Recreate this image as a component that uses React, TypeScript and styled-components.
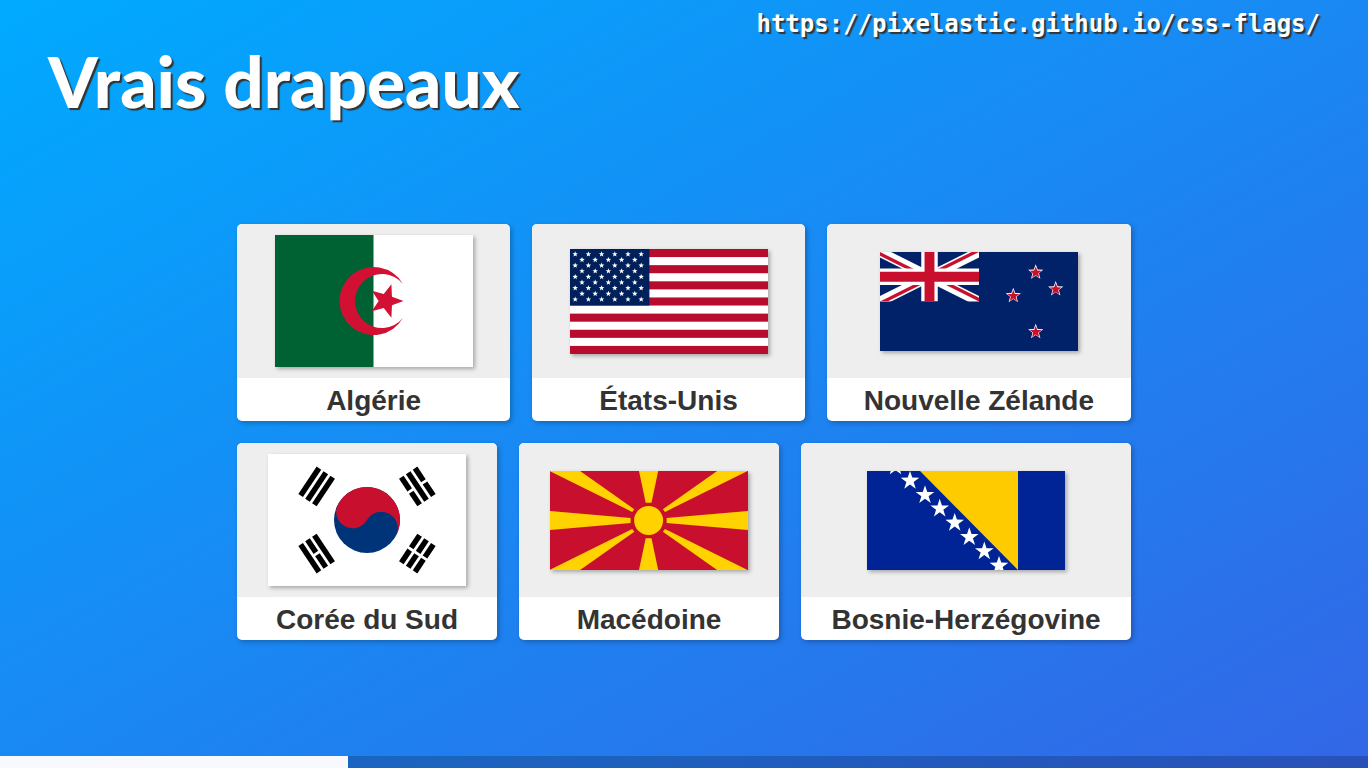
import React from 'react';
import styled, { createGlobalStyle } from 'styled-components';

const GlobalStyle = createGlobalStyle`
  html, body { margin: 0; padding: 0; height: 100%; overflow: hidden; }
  body { font-family: "Liberation Sans", Arial, sans-serif; }
`;

const Slide = styled.div`
  width: 1368px;
  height: 768px;
  display: flex;
  flex-direction: column;
  background: linear-gradient(to bottom right, #00aaff, #3366e6);
`;

const SourceLink = styled.div`
  align-self: flex-end;
  margin: 8px 48px 0 0;
  font: bold 24px/32px "DejaVu Sans Mono", monospace;
  color: #fff;
  text-shadow: 2px 2px 1px #333;
`;

const Title = styled.h1`
  margin: -2px 0 0 48px;
  font: 900 71px/86px "Lato", "Noto Sans", sans-serif;
  letter-spacing: 0;
  color: #fff;
  text-shadow: 2px 2px 1px #333;
`;

const Grid = styled.div`
  width: 894px;
  margin: 100px 0 0 237px;
  display: flex;
  flex-direction: column;
  gap: 22px;
`;

const Row = styled.div`
  display: flex;
  gap: 22px;
`;

const Card = styled.figure<{ $grow: number }>`
  flex: ${(p) => p.$grow} 1 0;
  margin: 0;
  height: 197px;
  display: flex;
  flex-direction: column;
  border-radius: 5px;
  overflow: hidden;
  background: #fff;
  box-shadow: 2px 2px 5px rgba(0, 0, 0, 0.25);
`;

const FlagArea = styled.div`
  height: 154px;
  flex: none;
  display: flex;
  align-items: center;
  justify-content: center;
  background: #eee;
`;

const FlagSvg = styled.svg`
  display: block;
  width: 198px;
  box-shadow: 2px 2px 4px rgba(0, 0, 0, 0.3);
`;

const Caption = styled.figcaption`
  flex: 1;
  text-align: center;
  font-size: 28px;
  font-weight: bold;
  line-height: 45px;
  color: #333;
`;

const ProgressTrack = styled.div`
  margin-top: auto;
  height: 12px;
  background: rgba(0, 0, 0, 0.2);
`;

const ProgressFill = styled.div`
  height: 100%;
  background: #f8f9ff;
`;

const RED = '#c8102e';
const NAVY = '#012169';

const starPoints = (cx: number, cy: number, r: number, rot = -90, ratio = 0.42) => {
  const pts: string[] = [];
  for (let i = 0; i < 10; i++) {
    const a = ((rot + i * 36) * Math.PI) / 180;
    const d = i % 2 ? r * ratio : r;
    pts.push(`${(cx + d * Math.cos(a)).toFixed(2)},${(cy + d * Math.sin(a)).toFixed(2)}`);
  }
  return pts.join(' ');
};

const Algeria = () => (
  <FlagSvg viewBox="0 0 198 132" height="132">
    <rect width="198" height="132" fill="#fff" />
    <rect width="98.5" height="132" fill="#006233" />
    <path d="M127.9 48.9A34 34 0 1 0 127.9 83.1A27 27 0 1 1 127.9 48.9Z" fill="#d21034" />
    <polygon points={starPoints(111, 66, 17.5, 0)} fill="#d21034" />
  </FlagSvg>
);

const Usa = () => {
  const stars: React.ReactNode[] = [];
  for (let row = 0; row < 9; row++) {
    const count = row % 2 ? 5 : 6;
    for (let col = 0; col < count; col++) {
      const x = row % 2 ? 12 + col * 13.2 : 5.2 + col * 13.2;
      const y = 5.2 + row * 5.65;
      stars.push(<polygon key={`${row}-${col}`} points={starPoints(x, y, 2.9)} fill="#fff" />);
    }
  }
  return (
    <FlagSvg viewBox="0 0 198 105" height="105">
      <rect width="198" height="105" fill="#fff" />
      {[0, 2, 4, 6, 8, 10, 12].map((i) => (
        <rect key={i} y={(i * 105) / 13} width="198" height={105 / 13} fill="#b80c2e" />
      ))}
      <rect width="79.4" height="56.5" fill="#00205b" />
      {stars}
    </FlagSvg>
  );
};

const NewZealand = () => (
  <FlagSvg viewBox="0 0 198 99" height="99">
    <defs>
      <clipPath id="uj-tri">
        <path d="M30 15h30v15zv15h-30zh-30v-15zv-15h30z" />
      </clipPath>
    </defs>
    <rect width="198" height="99" fill={NAVY} />
    <svg width="99" height="49.5" viewBox="0 0 60 30">
      <path d="M0 0L60 30M60 0L0 30" stroke="#fff" strokeWidth="6" />
      <path d="M0 0L60 30M60 0L0 30" stroke="#c8102e" strokeWidth="4" clipPath="url(#uj-tri)" />
      <path d="M30 0v30M0 15h60" stroke="#fff" strokeWidth="10" />
      <path d="M30 0v30M0 15h60" stroke="#c8102e" strokeWidth="6" />
    </svg>
    {[
      [155.7, 20.3],
      [175.7, 37],
      [133.3, 43.7],
      [155.7, 79.7],
    ].map(([x, y]) => (
      <g key={x + y}>
        <polygon points={starPoints(x, y, 8)} fill="#fff" />
        <polygon points={starPoints(x, y + 0.3, 6.2)} fill={RED} />
      </g>
    ))}
  </FlagSvg>
);

// 0 = solid bar, 1 = broken bar, listed from the centre outwards
const TRIGRAMS: [number, number[]][] = [
  [213.69, [0, 0, 0]],
  [-33.69, [1, 0, 1]],
  [146.31, [0, 1, 0]],
  [33.69, [1, 1, 1]],
];

const Korea = () => (
  <FlagSvg viewBox="0 0 198 132" height="132">
    <rect width="198" height="132" fill="#fff" />
    <g transform="translate(99 66)">
      <circle r="33" fill="#003478" />
      <path
        d="M-33 0A33 33 0 0 1 33 0A16.5 16.5 0 0 0 0 0A16.5 16.5 0 0 1 -33 0Z"
        fill={RED}
        transform="rotate(30)"
      />
      {TRIGRAMS.map(([angle, bars]) => (
        <g key={angle} transform={`rotate(${angle})`}>
          {bars.map((broken, i) => {
            const x = 49.5 + i * 8.25;
            return broken ? (
              <g key={i}>
                <rect x={x} y={-16.5} width="5.5" height="15.1" />
                <rect x={x} y={1.4} width="5.5" height="15.1" />
              </g>
            ) : (
              <rect key={i} x={x} y={-16.5} width="5.5" height="33" />
            );
          })}
        </g>
      ))}
    </g>
  </FlagSvg>
);

const Macedonia = () => (
  <FlagSvg viewBox="0 0 198 99" height="99">
    <rect width="198" height="99" fill={RED} />
    <g fill="#ffd200" transform="translate(98.6 49.5)">
      <circle r="14.5" />
      {[
        [1, 1],
        [-1, 1],
        [1, -1],
        [-1, -1],
      ].map(([sx, sy]) => (
        <polygon key={`${sx}${sy}`} points="-99,-49.5 -68.5,-49.5 -14.3,-11.2 -16.4,-8.6" transform={`scale(${sx} ${sy})`} />
      ))}
      <polygon points="-9.6,-49.5 9.6,-49.5 2.9,-17.8 -2.9,-17.8" />
      <polygon points="-9.6,49.5 9.6,49.5 2.9,17.8 -2.9,17.8" />
      <polygon points="-99,-9.6 -99,9.6 -18,2.4 -18,-2.4" />
      <polygon points="99.4,-9.6 99.4,9.6 18,2.4 18,-2.4" />
    </g>
  </FlagSvg>
);

const Bosnia = () => (
  <FlagSvg viewBox="0 0 198 99" height="99">
    <rect width="198" height="99" fill="#002395" />
    <polygon points="53,0 151,0 151,99" fill="#fecb00" />
    {[
      [28.5, -4.6],
      [43, 9.7],
      [58, 24],
      [72.7, 37.5],
      [87.7, 51.7],
      [102.3, 66],
      [117.3, 80.3],
      [132, 94.7],
    ].map(([x, y]) => (
      <polygon key={x} points={starPoints(x, y, 9.8, -90, 0.39)} fill="#fff" />
    ))}
  </FlagSvg>
);

const ROWS = [
  [
    { name: 'Algérie', grow: 273.2, Flag: Algeria },
    { name: 'États-Unis', grow: 272.6, Flag: Usa },
    { name: 'Nouvelle Zélande', grow: 304.2, Flag: NewZealand },
  ],
  [
    { name: 'Corée du Sud', grow: 260, Flag: Korea },
    { name: 'Macédoine', grow: 260, Flag: Macedonia },
    { name: 'Bosnie-Herzégovine', grow: 330, Flag: Bosnia },
  ],
];

export default function App() {
  return (
    <Slide>
      <GlobalStyle />
      <SourceLink>https://pixelastic.github.io/css-flags/</SourceLink>
      <Title>Vrais drapeaux</Title>
      <Grid>
        {ROWS.map((row, i) => (
          <Row key={i}>
            {row.map(({ name, grow, Flag }) => (
              <Card key={name} $grow={grow}>
                <FlagArea>
                  <Flag />
                </FlagArea>
                <Caption>{name}</Caption>
              </Card>
            ))}
          </Row>
        ))}
      </Grid>
      <ProgressTrack>
        <ProgressFill style={{ width: `${(348 / 1368) * 100}%` }} />
      </ProgressTrack>
    </Slide>
  );
}
